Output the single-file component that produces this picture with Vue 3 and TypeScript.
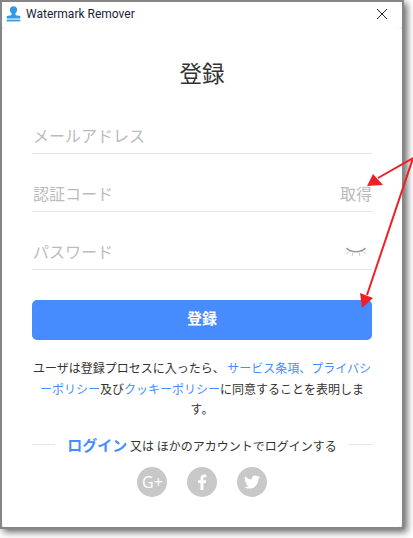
<template>
  <div class="screen">
    <div class="window">
      <header class="titlebar">
        <svg class="app-icon" width="15" height="16" viewBox="0 0 15 16">
          <circle cx="7.5" cy="3.8" r="3.6" fill="#2f9be6" />
          <path d="M5.800 6h3.400l.5 3.300 4.600.8v2.400H.7v-2.400l4.600-.8z" fill="#2f9be6" />
          <rect x="0.700" y="13.600" width="13.600" height="1.800" fill="#2f9be6" />
        </svg>
        <span class="app-name">Watermark Remover</span>
        <svg class="close" width="12" height="12" viewBox="0 0 12 12">
          <path d="M1 1l10 10M11 1L1 11" stroke="#222" stroke-width="1" fill="none" />
        </svg>
      </header>

      <main class="content">
        <h1 class="heading">登録</h1>

        <div class="field">
          <span class="placeholder">メールアドレス</span>
        </div>
        <div class="field">
          <span class="placeholder">認証コード</span>
          <span class="placeholder">取得</span>
        </div>
        <div class="field">
          <span class="placeholder">パスワード</span>
          <svg class="eye" width="22" height="12" viewBox="0 0 22 12">
            <path d="M1.500 2C6 7 16 7 20.500 2" stroke="#999" stroke-width="1.600" fill="none" />
            <path d="M4 5.500L1.500 8M8 6.800L7 10M14 6.800l1 3.200M18 5.500l2.500 2.500" stroke="#c8c8c8" stroke-width="1" fill="none" />
          </svg>
        </div>

        <button class="submit" type="button">登録</button>

        <p class="terms">
          ユーザは登録プロセスに入ったら、 <a>サービス条項、プライバシ</a><br />
          <a>ーポリシー</a>及び<a>クッキーポリシー</a>に同意することを表明しま<br />
          す。
        </p>

        <div class="login-row">
          <span class="rule"></span>
          <span class="login-text"><a class="login-link">ログイン</a> 又は ほかのアカウントでログインする</span>
          <span class="rule"></span>
        </div>

        <div class="socials">
          <span class="social">
            <svg width="30" height="30" viewBox="0 0 30 30">
              <text x="15.500" y="20.500" text-anchor="middle" class="gplus">G+</text>
            </svg>
          </span>
          <span class="social">
            <svg width="30" height="30" viewBox="0 0 30 30">
              <path d="M16.400 23v-7h2.400l.4-2.800h-2.800v-1.700c0-.8.300-1.300 1.400-1.300h1.500V7.700c-.3 0-1.200-.1-2.200-.1-2.200 0-3.600 1.300-3.600 3.600v2h-2.400V16h2.400v7z" fill="#fff" />
            </svg>
          </span>
          <span class="social">
            <svg width="30" height="30" viewBox="0 0 30 30">
              <path d="M23 10.100c-.6.300-1.200.4-1.900.5.700-.4 1.200-1 1.400-1.800-.6.400-1.300.6-2.100.8-.6-.6-1.400-1-2.400-1-1.800 0-3.300 1.500-3.300 3.300 0 .3 0 .5.100.7-2.700-.1-5.100-1.400-6.700-3.400-.3.500-.4 1-.4 1.600 0 1.100.6 2.100 1.500 2.700-.5 0-1-.2-1.500-.4 0 1.600 1.100 2.900 2.600 3.200-.5.100-1 .2-1.500.1.400 1.300 1.600 2.200 3.100 2.300-1.100.9-2.500 1.400-4.100 1.400H7c1.500.9 3.200 1.500 5.100 1.500 6.100 0 9.400-5 9.400-9.400v-.4c.6-.5 1.100-1.100 1.500-1.700z" fill="#fff" />
            </svg>
          </span>
        </div>
      </main>
    </div>

    <svg class="arrows" width="413" height="538" viewBox="0 0 413 538">
      <path d="M413 158L378 178M413 158L367 295" stroke="#ee2027" stroke-width="2" fill="none" />
      <path d="M367 186L373 174L383 185zM362 308L360 293L373 298z" fill="#ee2027" />
    </svg>
  </div>
</template>

<script setup lang="ts">
</script>

<style>
html,
body {
  margin: 0;
  background: #fff;
}
</style>

<style scoped>
.screen {
  position: relative;
  width: 413px;
  height: 538px;
  overflow: hidden;
  background: #fff;
  font-family: "Liberation Sans", "Noto Sans CJK JP", sans-serif;
}

.window {
  display: flex;
  flex-direction: column;
  width: 400px;
  height: 525px;
  margin: 2px 0 0 2px;
  background: #eeedfc;
  box-shadow: 0 0 0 2px #868686, 3px 3px 7px 2px #666;
}

.titlebar {
  display: flex;
  align-items: center;
  flex: none;
  height: 25px;
  padding: 0 14px 2px 4px;
  box-sizing: border-box;
  background: #fff;
}

.app-icon {
  flex: none;
}

.app-name {
  margin-left: 5px;
  font-family: Roboto, "Liberation Sans", sans-serif;
  font-size: 12px;
  color: #1c1c3a;
}

.close {
  margin-left: auto;
}

.content {
  display: flex;
  flex: 1;
  flex-direction: column;
  padding: 0 30px;
  border-radius: 5px;
  background: #fff;
  font-family: "Noto Sans CJK JP", sans-serif;
}

.heading {
  flex: none;
  margin: 28px 0 0;
  height: 36px;
  font-size: 22.500px;
  font-weight: 400;
  line-height: 34px;
  text-align: center;
  color: #333;
}

.field {
  display: flex;
  flex: none;
  align-items: flex-end;
  justify-content: space-between;
  height: 58px;
  border-bottom: 1px solid #e4e4e4;
  padding: 0 0 6px 1px;
  box-sizing: border-box;
}

.field:first-of-type {
  height: 63px;
}

.placeholder {
  font-size: 16px;
  line-height: 24px;
  color: #bbb;
}

.eye {
  margin: 0 5px 5px 0;
}

.submit {
  flex: none;
  height: 40px;
  margin-top: 30px;
  padding: 0 0 6px;
  border: none;
  border-radius: 5px;
  background: #478cff;
  color: #fff;
  font-family: inherit;
  font-size: 15px;
  font-weight: 700;
}

.terms {
  margin: 18px 0 0;
  font-size: 12px;
  line-height: 20.500px;
  text-align: center;
  color: #333;
}

.terms a {
  color: #478cff;
}

.login-row {
  display: flex;
  flex: none;
  align-items: center;
  justify-content: space-between;
  margin-top: 14px;
  height: 22px;
}

.rule {
  width: 23px;
  height: 1px;
  background: #e4e4e4;
}

.login-text {
  font-size: 12px;
  color: #333;
}

.login-link {
  font-size: 15px;
  font-weight: 700;
  color: #478cff;
}

.socials {
  display: flex;
  flex: none;
  justify-content: center;
  gap: 20px;
  margin-top: 11px;
}

.social {
  width: 30px;
  height: 30px;
  border-radius: 50%;
  background: #c8c8c8;
}

.social svg {
  display: block;
}

.gplus {
  font-family: "Open Sans", sans-serif;
  font-size: 16px;
  fill: #fff;
}

.arrows {
  position: absolute;
  top: 0;
  left: 0;
  pointer-events: none;
}
</style>
